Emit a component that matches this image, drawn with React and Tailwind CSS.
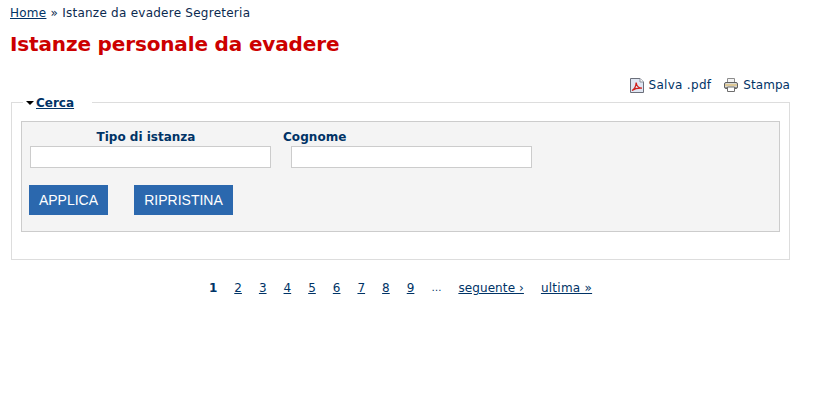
const dejavu = "font-['DejaVu_Sans',Verdana,sans-serif]"

function PdfIcon() {
  return (
    <svg width="16" height="16" viewBox="0 0 16 16" className="shrink-0">
      <path d="M1.5 1.5H11L14.5 5V15.5H1.5Z" fill="#dfe6f2" stroke="#6b6f7a" />
      <path d="M11 1.5V5H14.5" fill="#fff" stroke="#8a8e98" />
      <path d="M3 13.5C5 12.5 7 9 7.2 5.5C7.5 9 9.5 11 13 11.2C10 11 6 11.5 3 13.5Z" fill="none" stroke="#d0201c" strokeWidth="1.3" />
    </svg>
  )
}

function PrintIcon() {
  return (
    <svg width="16" height="16" viewBox="0 0 16 16" className="shrink-0">
      <path d="M4.5 1.5H11.5V6H4.5Z" fill="#f4f4f4" stroke="#8c8c8c" />
      <rect x="1.5" y="5.5" width="13" height="6" rx="1.5" fill="#d9d9d4" stroke="#5f5f5f" />
      <path d="M2 8H14" stroke="#e3b95c" />
      <path d="M2 10.5H14" stroke="#8a8a8a" />
      <path d="M4.5 10H11.5V14.5H4.5Z" fill="#fff" stroke="#6e6e6e" />
    </svg>
  )
}

export default function App() {
  const pages = ['2', '3', '4', '5', '6', '7', '8', '9']

  return (
    <div className={`${dejavu} h-[404px] w-[820px] overflow-hidden bg-white text-[12px] leading-[14px] text-[#0b2a4f]`}>
      <div className="w-[790px] pl-[10px] pt-[6px]">
        {/* Breadcrumb */}
        <div className="tracking-[0.25px]">
          <a href="#" className="text-[#003366] underline">Home</a> » Istanze da evadere Segreteria
        </div>

        <h1 className="mt-[12px] text-[20px] leading-[24px] font-bold tracking-[-0.15px] text-[#cc0000]">Istanze personale da evadere</h1>

        {/* Export links */}
        <div className="mt-[21px] flex items-center justify-end gap-[12px] text-[#003366]">
          <span className="flex items-center gap-[4px] tracking-[0.3px]"><PdfIcon />Salva .pdf</span>
          <span className="flex items-center gap-[4px] tracking-[0.05px]"><PrintIcon />Stampa</span>
        </div>

        {/* Search */}
        <fieldset className="ml-[1px] mt-[1px] h-[166px] border border-[#dddddd] pl-[9px] pr-[9px]">
          <legend className="ml-[2px] flex items-center px-[3px] pr-[18px] pt-[2px] font-bold text-[12px] leading-[14px]">
            <span className="mr-[2px] h-0 w-0 border-x-[4px] border-t-[4px] border-x-transparent border-t-black" />
            <a href="#" className="text-[#003366] underline">Cerca</a>
          </legend>
          <div className="mt-[11px] h-[111px] border border-[#cccccc] bg-[#f4f4f4] pl-[7px]">
            <div className="mt-[8px] flex gap-[20px] pl-px">
              <div className="w-[241px]">
                <label className="block pr-[9px] text-center font-bold text-[#003366]">Tipo di istanza</label>
                <input className="mt-[2px] block h-[22px] w-[241px] border border-[#cccccc] bg-white" />
              </div>
              <div className="w-[241px]">
                <label className="-ml-[8px] block font-bold tracking-[0.05px] text-[#003366]">Cognome</label>
                <input className="mt-[2px] block h-[22px] w-[241px] border border-[#cccccc] bg-white" />
              </div>
            </div>
            <div className="mt-[17px] flex gap-[26px] font-['Liberation_Sans',Arial,sans-serif] text-[14px] text-white">
              <button className="h-[30px] w-[79px] bg-[#2b68ae]">APPLICA</button>
              <button className="h-[30px] w-[99px] bg-[#2b68ae]">RIPRISTINA</button>
            </div>
          </div>
        </fieldset>

        {/* Pager */}
        <div className="mt-[21px] flex justify-center gap-[17px] pl-px text-[#003366]">
          <b>1</b>
          {pages.map((p) => (
            <a key={p} href="#" className="underline">{p}</a>
          ))}
          <span className="text-[10px]">…</span>
          <a href="#" className="tracking-[0.1px] underline">seguente ›</a>
          <a href="#" className="tracking-[0.25px] underline">ultima »</a>
        </div>
      </div>
    </div>
  )
}
